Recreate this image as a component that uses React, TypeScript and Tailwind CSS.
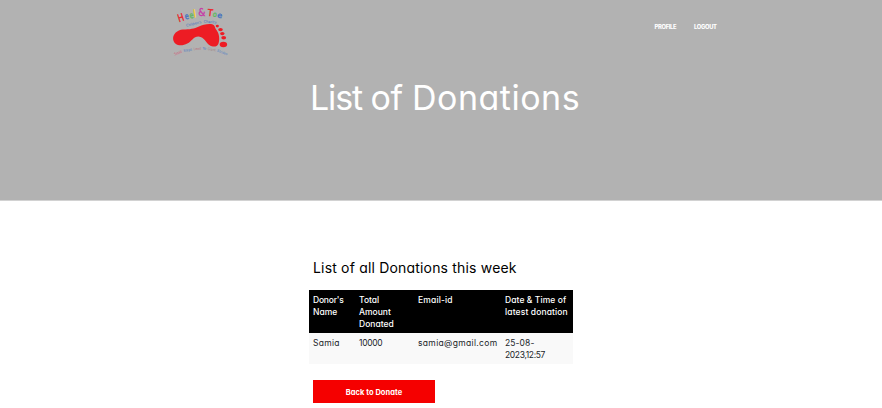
import type { ReactNode } from "react";

const navItems = [
  { label: "PROFILE", width: "w-[39.5px]" },
  { label: "LOGOUT", width: "w-[23px]" },
];

const title = [
  { text: "H", color: "#ed1c24", place: "translate(14 20.3) rotate(-18) scale(.78 1)", size: 10.5 },
  { text: "e", color: "#3f6fc0", place: "translate(20.6 17.6) rotate(-14) scale(.76 1)", size: 8.5 },
  { text: "e", color: "#5cb85c", place: "translate(24.9 16.5) rotate(-10) scale(.76 1)", size: 8.5 },
  { text: "l", color: "#ffd320", place: "translate(29 15.4) rotate(-8) scale(.8 1)", size: 10.5 },
  { text: "&", color: "#c639a7", place: "translate(33.2 14.4) scale(.92 1)", size: 10 },
  { text: "T", color: "#ed1c24", place: "translate(42.3 13.8) rotate(7) scale(.9 1)", size: 9.5 },
  { text: "o", color: "#5cb85c", place: "translate(47.4 14.6) rotate(9) scale(.88 1)", size: 7.5 },
  { text: "e", color: "#3f6fc0", place: "translate(52 15.6) rotate(10) scale(1.05 1)", size: 7.5 },
];

const smallWords = [
  { text: "Children’s", color: "#3f6fc0", place: "translate(21.6 24.8) rotate(-14)", length: 15.5 },
  { text: "Charity", color: "#3f6fc0", place: "translate(38.6 20.6) rotate(5)", length: 13 },
  { text: "Small", color: "#d84f70", place: "translate(9.8 53.6) rotate(-22)", length: 8 },
  { text: "Steps", color: "#4a78c4", place: "translate(18.8 50.1) rotate(-11)", length: 8.4 },
  { text: "Lead", color: "#b8707c", place: "translate(28.8 48.2) rotate(-5)", length: 7.4 },
  { text: "To", color: "#3f74c8", place: "translate(37.6 47.6) rotate(2)", length: 3.6 },
  { text: "Giant", color: "#a07c82", place: "translate(42.5 48) rotate(9)", length: 8 },
  { text: "Strides", color: "#5582c4", place: "translate(51.8 49.6) rotate(20)", length: 11 },
];

function Logo() {
  return (
    <svg viewBox="0 0 70 60" className="block h-[60px] w-[70px]" role="img" aria-label="Heel & Toe Children's Charity">
      <g fill="#ed1c24">
        <path d="M8.1 37C8 32 12 28.2 18 27.6C25 27.2 29 26.8 34 24.4C38 22.5 46.5 20.8 49 23.3C50.3 25 50 26.5 51.8 28.6C54.5 32 54.8 38 53.5 41.5C52 45.5 47.6 45 45 43.4C41 41 39.5 34.8 33.5 34.4C28.5 34.3 27 39 22.3 41.6C16.5 44.8 8.8 43.8 8.1 37Z" />
        <ellipse cx="52.3" cy="24.1" rx="1.6" ry="1.3" />
        <ellipse cx="55.5" cy="27.6" rx="2.3" ry="1.6" />
        <ellipse cx="57.3" cy="31.6" rx="2.2" ry="1.6" />
        <ellipse cx="58.7" cy="35.7" rx="2.4" ry="1.8" />
        <ellipse cx="58.4" cy="42.5" rx="3.7" ry="2.7" />
      </g>
      <g fontFamily="'DejaVu Sans', sans-serif" strokeWidth="0.35">
        {title.map((letter, index) => (
          <text key={index} fill={letter.color} stroke={letter.color} transform={letter.place} fontSize={letter.size}>
            {letter.text}
          </text>
        ))}
      </g>
      <g fontFamily="'DejaVu Sans', sans-serif" fontSize="3.6">
        {smallWords.map((word) => (
          <text key={word.text} fill={word.color} transform={word.place} textLength={word.length} lengthAdjust="spacingAndGlyphs">
            {word.text}
          </text>
        ))}
      </g>
    </svg>
  );
}

function HeadCell({ children }: { children: ReactNode }) {
  return <th className="px-[4px] pt-[3.5px] pb-[3.5px] text-left align-top font-medium whitespace-nowrap">{children}</th>;
}

function Cell({ children, tracking }: { children: ReactNode; tracking: string }) {
  return <td className={`px-[4px] pt-[4px] pb-[3px] align-top whitespace-nowrap ${tracking}`}>{children}</td>;
}

export default function App() {
  return (
    <div className="h-[408px] overflow-hidden bg-white font-['Inter','Liberation_Sans',sans-serif] text-[#212529] [font-feature-settings:'cv11']">
      <header className="h-[201px] border-b border-[#d2d2d2] bg-[#b2b2b2] text-white">
        <div className="flex h-[70px] items-start justify-between pt-[2px] pr-[165px] pl-[165px]">
          <Logo />
          <nav className="mt-[20px] flex text-[5.8px] leading-[10px] font-extrabold tracking-[-0.32px]">
            {navItems.map((item) => (
              <a key={item.label} className={item.width}>{item.label}</a>
            ))}
          </nav>
        </div>
        <h1 className="flex pl-[310px] text-[34px] leading-[56px] font-normal whitespace-nowrap">
          <span className="w-[60.5px] tracking-[-1.1px]">List </span>
          <span className="w-[41.5px] tracking-[-0.3px]">of </span>
          <span className="tracking-[0.5px]">Donations</span>
        </h1>
      </header>
      <main className="pt-[57px] pl-[309px]">
        <h2 className="pl-[4px] text-[14px] leading-[20px] font-normal tracking-[0.18px] whitespace-nowrap text-black">
          List of all Donations this week
        </h2>
        <table className="mt-[12px] w-[264px] table-fixed border-collapse text-[8.5px] leading-[12px]">
          <colgroup>
            <col className="w-[46px]" />
            <col className="w-[59px]" />
            <col className="w-[87px]" />
            <col className="w-[72px]" />
          </colgroup>
          <thead className="bg-black text-white">
            <tr className="h-[43px]">
              <HeadCell><span className="tracking-[-0.2px]">Donor's</span><br />Name</HeadCell>
              <HeadCell>Total<br />Amount<br />Donated</HeadCell>
              <HeadCell><span className="tracking-[0.15px]">Email-id</span></HeadCell>
              <HeadCell><span className="tracking-[0.08px]">Date &amp; Time of</span><br /><span className="tracking-[0.12px]">latest donation</span></HeadCell>
            </tr>
          </thead>
          <tbody className="bg-[#f9f9f9]">
            <tr className="h-[31px]">
              <Cell tracking="tracking-[0.3px]">Samia</Cell>
              <Cell tracking="tracking-[-0.3px]">10000</Cell>
              <Cell tracking="tracking-[0.34px]">samia@gmail.com</Cell>
              <Cell tracking="tracking-[-0.35px]"><span className="tracking-[0.1px]">25-08-</span><br />2023,12:57</Cell>
            </tr>
          </tbody>
        </table>
        <button className="mt-[16px] ml-[4px] block h-[23px] w-[122px] bg-[#f50000] pt-[2px] text-[7.5px] leading-[21px] font-bold tracking-[0.05px] text-white">
          Back to Donate
        </button>
      </main>
    </div>
  );
}
